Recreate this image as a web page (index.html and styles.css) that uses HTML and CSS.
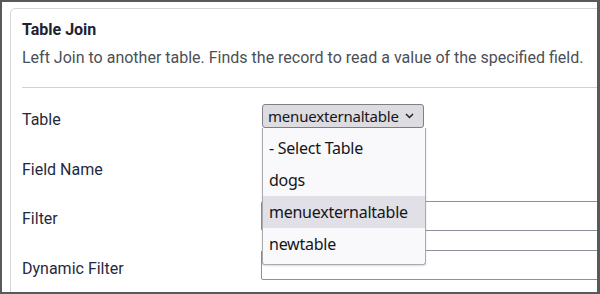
FILE: index.html
```html
<!DOCTYPE html>
<html>
<head>
<meta charset="utf-8">
<link rel="stylesheet" href="styles.css">
</head>
<body>
<div class="frame">
  <div class="card">
    <div class="card-head">
      <h3 class="title">Table Join</h3>
      <p class="desc">Left Join to another table. Finds the record to read a value of the specified field.</p>
    </div>
    <div class="form">
      <div class="row">
        <label class="label">Table</label>
        <div class="control">
          <div class="select-wrap">
            <div class="select">
              <span class="select-text">menuexternaltable</span>
              <svg class="chev" width="9" height="6" viewBox="0 0 9 6"><polyline points="1,1 4.5,4.5 8,1" fill="none" stroke="#222" stroke-width="1.5"/></svg>
            </div>
            <ul class="menu">
              <li class="opt">- Select Table</li>
              <li class="opt">dogs</li>
              <li class="opt active">menuexternaltable</li>
              <li class="opt">newtable</li>
            </ul>
          </div>
        </div>
      </div>
      <div class="row">
        <label class="label">Field Name</label>
        <div class="control"></div>
      </div>
      <div class="row">
        <label class="label">Filter</label>
        <div class="control"><div class="input"></div></div>
      </div>
      <div class="row">
        <label class="label">Dynamic Filter</label>
        <div class="control"><div class="input"></div></div>
      </div>
    </div>
  </div>
</div>
</body>
</html>
```
FILE: styles.css
```css
html, body {
  margin: 0;
  padding: 0;
  width: 600px;
  height: 294px;
  overflow: hidden;
  background: #595959;
}
.frame {
  margin: 2px 3px 2px 2px;
  width: 595px;
  height: 290px;
  background: #fff;
  overflow: hidden;
  padding: 6px 0 0 8px;
  box-sizing: border-box;
  font-family: Roboto, "Liberation Sans", sans-serif;
}
.card {
  width: 640px;
  height: 320px;
  border: 1px solid #d6d6d6;
  border-radius: 5px;
  box-sizing: border-box;
  padding: 0 0 0 11px;
}
.card-head {
  border-bottom: 1px solid #d2d2d2;
  padding: 11px 0 0 0;
  height: 79px;
  box-sizing: border-box;
}
.title {
  margin: 0;
  font-size: 16px;
  font-weight: 700;
  color: #1d2333;
  line-height: 20px;
}
.desc {
  margin: 8px 0 0 0;
  font-size: 16px;
  color: #4b4f58;
  line-height: 20px;
}
.form {
  padding-top: 5px;
}
.row {
  display: flex;
  align-items: center;
  height: 49.5px;
}
.label {
  width: 240px;
  flex: none;
  font-size: 16px;
  color: #1f2a40;
  padding-top: 4px;
}
.control {
  flex: 1;
  display: flex;
  align-items: center;
}
.select-wrap {
  position: relative;
  margin-top: -4px;
}
.select {
  width: 162px;
  height: 24px;
  box-sizing: border-box;
  border: 1px solid #7f7f8a;
  border-radius: 3px;
  background: #dcdce1;
  display: flex;
  align-items: center;
  padding: 0 9px 0 5px;
  font-family: "Noto Sans", "Open Sans", sans-serif;
  font-size: 15px;
  letter-spacing: -0.2px;
  color: #15151a;
}
.select-text {
  flex: 1;
  white-space: nowrap;
}
.chev {
  margin-top: 1px;
  flex: none;
}
.menu {
  position: absolute;
  left: 0;
  top: 100%;
  width: 164px;
  margin: 0;
  padding: 4px 0;
  list-style: none;
  background: #f9f9fb;
  border: 1px solid #a9a9b0;
  border-top: none;
  border-radius: 0 0 3px 3px;
  box-shadow: 0 1px 2px rgba(0,0,0,0.15);
  z-index: 5;
  box-sizing: border-box;
}
.opt {
  height: 32px;
  line-height: 32px;
  padding-left: 6px;
  font-family: "Noto Sans", "Open Sans", sans-serif;
  font-size: 16px;
  letter-spacing: -0.25px;
  color: #15151a;
  white-space: nowrap;
}
.opt.active {
  background: #e0e0e6;
}
.input {
  margin-left: -1px;
  width: 400px;
  height: 30px;
  box-sizing: border-box;
  border: 1px solid #8f8f9d;
  border-radius: 2px;
  background: #fff;
  margin-top: -2px;
}
```
